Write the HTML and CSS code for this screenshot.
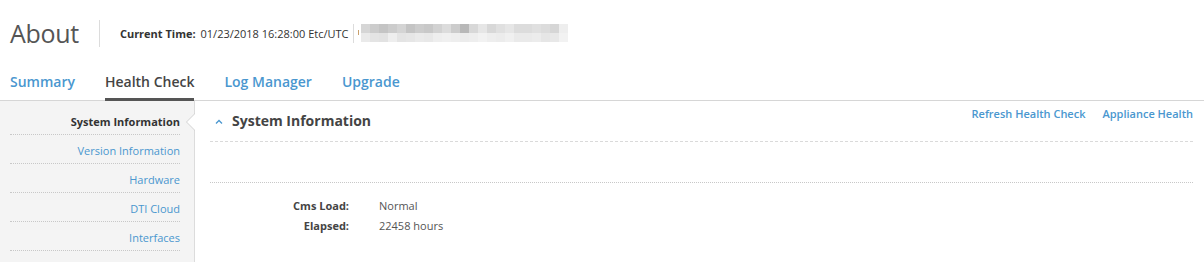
FILE: index.html
```html
<html>
<head>
	<meta charset="utf-8" />
	<title>About</title>
	<link rel="stylesheet" href="styles.css">
</head>

<body>
	<header class="page-head">
		<h1 class="title">About</h1>
		<div class="divider"></div>
		<span class="time"><b>Current Time:</b> 01/23/2018 16:28:00 Etc/UTC</span>
		<div class="divider small"></div>
		<svg class="blurred" width="212" height="18" viewBox="0 0 212 18">
			<rect x="0" y="6" width="1" height="5" fill="#c9a06c" />
			<g id="blur"></g>
		</svg>
	</header>

	<nav class="tabs">
		<a class="tab">Summary</a>
		<a class="tab active">Health Check</a>
		<a class="tab">Log Manager</a>
		<a class="tab">Upgrade</a>
	</nav>

	<div class="layout">
		<ul class="side-nav">
			<li class="active">System Information</li>
			<li>Version Information</li>
			<li>Hardware</li>
			<li>DTI Cloud</li>
			<li>Interfaces</li>
		</ul>

		<div class="main">
			<div class="section-head">
				<h2 class="section-title">
					<svg class="caret" width="8" height="5" viewBox="0 0 8 5"><path d="M1 4.5 L4 1.5 L7 4.5" fill="none" stroke="#4a97cf" stroke-width="1.3" /></svg>
					System Information
				</h2>
				<div class="actions">
					<a>Refresh Health Check</a>
					<a>Appliance Health</a>
				</div>
			</div>
			<div class="spacer"></div>
			<dl class="stats">
				<dt>Cms Load:</dt><dd>Normal</dd>
				<dt>Elapsed:</dt><dd>22458 hours</dd>
			</dl>
		</div>
	</div>

	<script>
		// pixelated hostname
		const topRow = ["d6","cc","c4","cc","d4","c4","cc","c8","d2","dc","cc","b8","d8","e6","d8","e0","e6","dc","dc","e0","dc","d6","ee"];
		const bottomRow = ["ea","e4","e2","ee","e4","e6","ea","e8","ee","f0","ee","ec","ee","f2","ee","ec","f0","ea","ea","ec","e6","e8","f2"];
		const blur = document.getElementById("blur");
		const ns = "http://www.w3.org/2000/svg";
		[topRow, bottomRow].forEach((row, r) => {
			row.forEach((c, i) => {
				const rect = document.createElementNS(ns, "rect");
				rect.setAttribute("x", 3 + i * 9);
				rect.setAttribute("y", r * 9);
				rect.setAttribute("width", 9);
				rect.setAttribute("height", 9);
				rect.setAttribute("fill", "#" + c + c + c);
				blur.appendChild(rect);
			});
		});
	</script>
</body>
</html>
```

FILE: styles.css
```css
:root {
	--link-color: #4a97cf;
	--text-color: #444;
	--line-color: #dcdcdc;
}

body {
	margin: 0;
	background-color: white;
	font-family: "Open Sans", "Liberation Sans", Arial, sans-serif;
	color: var(--text-color);
	font-size: 11px;
}

a {
	color: var(--link-color);
	text-decoration: none;
	cursor: pointer;
}

.page-head {
	display: flex;
	align-items: center;
	height: 28px;
	padding: 19px 10px 0;
}

.title {
	margin: 0;
	font-size: 25px;
	font-weight: normal;
	color: #555;
	letter-spacing: -0.3px;
}

.divider {
	height: 27px;
	border-left: 1px solid var(--line-color);
	margin: 0 20px;
}

.divider.small {
	height: 19px;
	margin: 0 4px 0 5px;
}

.time {
	color: #333;
}

.time b {
	font-weight: 700;
	margin-right: 2px;
}

.blurred {
	display: block;
}

.tabs {
	display: flex;
	gap: 30px;
	margin-top: 25px;
	padding: 0 10px;
	border-bottom: 1px solid #d6d6d6;
}

.tab {
	font-size: 14px;
	font-weight: 600;
	line-height: 20px;
	padding-bottom: 6px;
	border-bottom: 3px solid transparent;
	margin-bottom: -1px;
}

.tab.active {
	color: #444;
	border-bottom-color: #555;
}

.layout {
	display: flex;
}

.side-nav {
	list-style: none;
	margin: 0;
	padding: 5px 14px 0 10px;
	width: 170px;
	background-color: #f4f4f4;
	border-right: 1px solid var(--line-color);
	height: 157px;
}

.side-nav li {
	position: relative;
	text-align: right;
	font-size: 11px;
	line-height: 20px;
	padding: 6px 0 2px;
	color: var(--link-color);
	border-bottom: 1px dotted #c8c8c8;
}

.side-nav li.active {
	color: #333;
	font-weight: 700;
}

.side-nav li.active::before,
.side-nav li.active::after {
	content: "";
	position: absolute;
	top: 7px;
	right: -15px;
	border-style: solid;
	border-width: 9px 9px 9px 0;
	border-color: transparent #d2d2d2 transparent transparent;
}

.side-nav li.active::after {
	right: -16px;
	border-right-color: white;
}

.main {
	flex: 1;
	padding: 0 11px 0 15px;
}

.section-head {
	display: flex;
	justify-content: space-between;
	align-items: flex-start;
	border-bottom: 1px dashed #dadada;
	height: 40px;
}

.section-title {
	display: flex;
	align-items: center;
	margin: 0;
	padding-top: 10px;
	font-size: 14px;
	font-weight: 700;
	color: #444;
}

.caret {
	display: block;
	margin: 1px 9px 0 5px;
}

.actions {
	display: flex;
	gap: 17px;
	padding-top: 5px;
	font-size: 11px;
	font-weight: 600;
}

.spacer {
	height: 40px;
	border-bottom: 1px dotted #c8c8c8;
}

.stats {
	display: grid;
	grid-template-columns: 139px auto;
	column-gap: 30px;
	margin: 13px 0 0;
	line-height: 20px;
}

.stats dt {
	text-align: right;
	font-weight: 700;
}

.stats dd {
	margin: 0;
	color: #555;
}
```
